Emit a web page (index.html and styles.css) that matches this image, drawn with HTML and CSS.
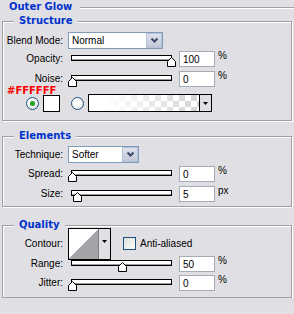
FILE: index.html
```html
<!DOCTYPE html>
<html lang="en">

<head>
    <meta charset="UTF-8">
    <title>Outer Glow</title>
    <link rel="stylesheet" href="styles.css">
</head>

<body>
    <div class="panel">
        <div class="titleBar">
            <span class="title">Outer Glow</span>
            <span class="rule"></span>
        </div>

        <div class="group structure">
            <div class="legend">Structure</div>
            <div class="row first">
                <span class="lbl">Blend Mode:</span>
                <div class="select wide">
                    <span>Normal</span>
                    <span class="drop"><svg width="9" height="7" viewBox="0 0 9 7"><polyline points="1.5,1.5 4.5,4.5 7.5,1.5" fill="none" stroke="#3c4a6e" stroke-width="2" /></svg></span>
                </div>
            </div>
            <div class="row r2">
                <span class="lbl">Opacity:</span>
                <div class="slider">
                    <div class="track">
                        <svg class="thumb" style="left:100%" width="9" height="10" viewBox="0 0 9 10"><path d="M0.5 9.5V4.5L4.5 0.5L8.5 4.5V9.5Z" fill="#fff" stroke="#000" /></svg>
                    </div>
                </div>
                <div class="field">100</div>
                <span class="unit">%</span>
            </div>
            <div class="row r3">
                <span class="lbl">Noise:</span>
                <div class="slider">
                    <div class="track">
                        <svg class="thumb" style="left:0%" width="9" height="10" viewBox="0 0 9 10"><path d="M0.5 9.5V4.5L4.5 0.5L8.5 4.5V9.5Z" fill="#fff" stroke="#000" /></svg>
                    </div>
                </div>
                <div class="field">0</div>
                <span class="unit">%</span>
            </div>
            <div class="hex">#FFFFFF</div>
            <div class="colorRow">
                <span class="radio on"></span>
                <span class="swatch"></span>
                <span class="radio second"></span>
                <div class="gradient">
                    <span class="gradFill"></span>
                    <span class="gradDrop"><svg width="5" height="3" viewBox="0 0 5 3"><path d="M0 0H5L2.5 3Z" fill="#000" /></svg></span>
                </div>
            </div>
        </div>

        <div class="group elements">
            <div class="legend">Elements</div>
            <div class="row first">
                <span class="lbl">Technique:</span>
                <div class="select narrow">
                    <span>Softer</span>
                    <span class="drop"><svg width="9" height="7" viewBox="0 0 9 7"><polyline points="1.5,1.5 4.5,4.5 7.5,1.5" fill="none" stroke="#3c4a6e" stroke-width="2" /></svg></span>
                </div>
            </div>
            <div class="row r2">
                <span class="lbl">Spread:</span>
                <div class="slider">
                    <div class="track">
                        <svg class="thumb" style="left:0%" width="9" height="10" viewBox="0 0 9 10"><path d="M0.5 9.5V4.5L4.5 0.5L8.5 4.5V9.5Z" fill="#fff" stroke="#000" /></svg>
                    </div>
                </div>
                <div class="field">0</div>
                <span class="unit">%</span>
            </div>
            <div class="row r3">
                <span class="lbl">Size:</span>
                <div class="slider">
                    <div class="track">
                        <svg class="thumb" style="left:5%" width="9" height="10" viewBox="0 0 9 10"><path d="M0.5 9.5V4.5L4.5 0.5L8.5 4.5V9.5Z" fill="#fff" stroke="#000" /></svg>
                    </div>
                </div>
                <div class="field">5</div>
                <span class="unit">px</span>
            </div>
        </div>

        <div class="group quality">
            <div class="legend">Quality</div>
            <div class="row first contourRow">
                <span class="lbl">Contour:</span>
                <div class="contour">
                    <svg class="curve" width="29" height="30" viewBox="0 0 29 30" shape-rendering="crispEdges"><rect width="29" height="30" fill="#fff" /><path d="M0 30L29 0V30Z" fill="#a4a3a8" /></svg>
                    <span class="contourDrop"><svg width="5" height="3" viewBox="0 0 5 3"><path d="M0 0H5L2.5 3Z" fill="#000" /></svg></span>
                </div>
                <span class="check"></span>
                <span class="checkLbl">Anti-aliased</span>
            </div>
            <div class="row r2">
                <span class="lbl">Range:</span>
                <div class="slider">
                    <div class="track">
                        <svg class="thumb" style="left:50%" width="9" height="10" viewBox="0 0 9 10"><path d="M0.5 9.5V4.5L4.5 0.5L8.5 4.5V9.5Z" fill="#fff" stroke="#000" /></svg>
                    </div>
                </div>
                <div class="field">50</div>
                <span class="unit">%</span>
            </div>
            <div class="row r3">
                <span class="lbl">Jitter:</span>
                <div class="slider">
                    <div class="track">
                        <svg class="thumb" style="left:0%" width="9" height="10" viewBox="0 0 9 10"><path d="M0.5 9.5V4.5L4.5 0.5L8.5 4.5V9.5Z" fill="#fff" stroke="#000" /></svg>
                    </div>
                </div>
                <div class="field">0</div>
                <span class="unit">%</span>
            </div>
        </div>
    </div>
</body>

</html>
```

FILE: styles.css
```css
body {
    margin: 0;
    background: #e0dfe3;
    font: 10px "Liberation Sans", Arial, sans-serif;
    color: #000;
}

.panel {
    width: 294px;
}

/* header line */
.titleBar {
    display: flex;
    height: 16px;
}

.title {
    font: bold 10px "DejaVu Sans", sans-serif;
    color: #0033cc;
    padding-left: 9px;
    margin-top: 1px;
}

.rule {
    flex: 1;
    height: 0;
    margin: 7px 0 0 8px;
    border-top: 1px solid #a0a0a4;
    border-bottom: 1px solid #fff;
}

/* etched group boxes */
.group {
    display: flex;
    flex-direction: column;
    margin: 0 2px;
    border: 1px solid #a0a0a4;
    box-shadow: inset 1px 1px 0 #fff, 1px 1px 0 #fff;
}

.structure {
    margin-top: 5px;
    padding-bottom: 8px;
}

.elements {
    margin-top: 15px;
    padding-bottom: 4px;
}

.quality {
    margin-top: 18px;
    padding-bottom: 6px;
}

.legend {
    align-self: flex-start;
    margin: -7px 0 0 11px;
    padding: 0 5px;
    background: #e0dfe3;
    font: bold 10px/12px "DejaVu Sans", sans-serif;
    color: #0033cc;
}

.row {
    display: flex;
    align-items: center;
    height: 16px;
}

.row.first {
    margin-top: 4px;
    height: 17px;
}

.structure .row.first {
    margin-top: 5px;
}

.row.r2 {
    margin-top: 2px;
}

.row.r3 {
    margin-top: 4px;
}

.elements .row.r2,
.quality .row.r3 {
    margin-top: 3px;
}

.quality .row.r2 {
    margin-top: 4px;
}

.lbl {
    flex: none;
    width: 60px;
    margin-right: 5px;
    text-align: right;
    padding-bottom: 1px;
}

/* dropdowns */
.select {
    box-sizing: border-box;
    height: 17px;
    border: 1px solid #7f9db9;
    background: #fff;
    display: flex;
    align-items: center;
    justify-content: space-between;
    padding-left: 3px;
}

.select.wide {
    width: 95px;
}

.select.narrow {
    width: 71px;
}

.drop {
    box-sizing: border-box;
    width: 16px;
    height: 15px;
    border: 1px solid #b4c0dc;
    background: linear-gradient(#dde1ec, #c3c8d6);
    display: flex;
    align-items: center;
    justify-content: center;
}

/* sliders */
.slider {
    box-sizing: border-box;
    width: 111px;
    align-self: stretch;
    padding: 4px 7px 0 3px;
}

.track {
    position: relative;
    box-sizing: border-box;
    height: 6px;
    border: 1px solid #000;
    background: #fff;
    box-shadow: inset 0 -1px 0 #9a9a9a;
}

.thumb {
    position: absolute;
    top: 1px;
    margin-left: -4px;
}

.field {
    box-sizing: border-box;
    width: 36px;
    height: 16px;
    border: 1px solid #a5acb5;
    background: #fff;
    padding: 2px 0 0 3px;
    line-height: 12px;
}

.unit {
    align-self: flex-start;
    margin-left: 3px;
    line-height: 10px;
}

/* color choice */
.hex {
    height: 6px;
    margin-top: 1px;
    padding-left: 4px;
    font: bold 10px/6px "DejaVu Sans", sans-serif;
    color: #ff0000;
}

.colorRow {
    display: flex;
    align-items: center;
    height: 18px;
    padding-left: 23px;
}

.radio {
    box-sizing: border-box;
    width: 13px;
    height: 13px;
    border-radius: 50%;
    border: 1px solid #1c5180;
    background: radial-gradient(circle at 40% 40%, #fff 30%, #d4d4ce 100%);
    display: flex;
    align-items: center;
    justify-content: center;
}

.radio.on::after {
    content: "";
    width: 5px;
    height: 5px;
    border-radius: 50%;
    background: #21a121;
}

.radio.second {
    margin-left: 11px;
}

.swatch {
    box-sizing: border-box;
    width: 17px;
    height: 17px;
    margin-left: 4px;
    border: 1px solid #000;
    background: #fff;
}

.gradient {
    box-sizing: border-box;
    display: flex;
    width: 124px;
    height: 18px;
    margin-left: 4px;
    border: 1px solid #000;
}

.gradFill {
    flex: 1;
    background-color: #fff;
    background-image:
        linear-gradient(to right, #fff 15%, rgba(255, 255, 255, 0) 100%),
        linear-gradient(45deg, #d4d4d4 25%, transparent 25%, transparent 75%, #d4d4d4 75%),
        linear-gradient(45deg, #d4d4d4 25%, transparent 25%, transparent 75%, #d4d4d4 75%);
    background-size: 100% 100%, 12px 12px, 12px 12px;
    background-position: 0 0, 0 0, 6px 6px;
}

.gradDrop {
    width: 11px;
    border-left: 1px solid #000;
    background: #e0dfe3;
    display: flex;
    align-items: center;
    justify-content: center;
}

/* contour */
.contourRow {
    height: 32px;
}

.contour {
    box-sizing: border-box;
    display: flex;
    width: 43px;
    height: 32px;
    border: 1px solid #000;
}

.curve {
    display: block;
}

.contourDrop {
    flex: 1;
    border-left: 1px solid #808080;
    background: #e0dfe3;
    display: flex;
    justify-content: center;
    padding-top: 11px;
}

.check {
    box-sizing: border-box;
    width: 13px;
    height: 13px;
    margin-left: 12px;
    border: 1px solid #1c5180;
    background: linear-gradient(135deg, #dcdcd7, #fff);
}

.checkLbl {
    margin-left: 4px;
    padding-bottom: 1px;
}
```
